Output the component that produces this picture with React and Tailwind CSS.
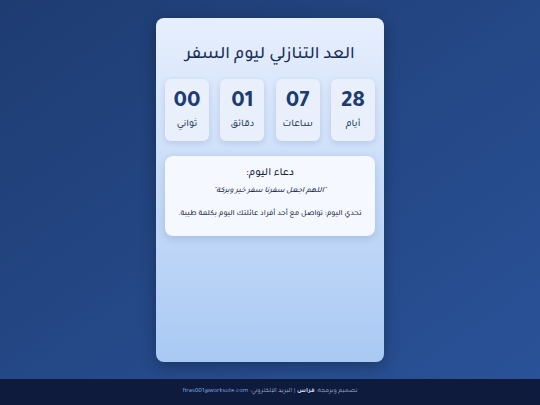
import React from "react";

const units = [
  { value: "28", label: "أيام" },
  { value: "07", label: "ساعات" },
  { value: "01", label: "دقائق" },
  { value: "00", label: "ثواني" },
];

export default function App() {
  return (
    <div
      dir="rtl"
      className="w-[540px] h-[405px] flex flex-col overflow-hidden font-['Tajawal','Noto_Sans_Arabic','DejaVu_Sans',sans-serif]"
    >
      <main className="h-[379px] flex items-center justify-center bg-gradient-to-br from-[#1e3c72] to-[#2a5298]">
        <section className="w-[228px] h-[344px] rounded-[8px] bg-gradient-to-b from-[#e7effd] to-[#a9c9f3] shadow-[0_4px_16px_rgba(0,0,0,0.3)] px-[9px] pt-[26px] flex flex-col">
          <h1 className="text-center text-[17.5px] leading-[24px] font-medium text-[#1a2f5c]">
            العد التنازلي ليوم السفر
          </h1>
          <div className="mt-[11px] flex justify-between">
            {units.map((u) => (
              <div
                key={u.label}
                className="w-[44px] h-[62px] rounded-[6px] bg-[#e9f0fc] shadow-[0_2px_6px_rgba(30,60,114,0.15)] flex flex-col items-center pt-[11px]"
              >
                <span className="text-[24px] leading-[26px] font-bold text-[#1e3c72]">
                  {u.value}
                </span>
                <span className="mt-[3px] text-[10px] leading-[12px] font-medium text-[#2b3f66]">
                  {u.label}
                </span>
              </div>
            ))}
          </div>
          <div className="mt-[15px] h-[80px] rounded-[8px] bg-[#f5f8fe] shadow-[0_2px_8px_rgba(30,60,114,0.18)] flex flex-col items-center pt-[11px] text-[#1a2a4a] font-medium">
            <h2 className="text-[11px] leading-[14px]">دعاء اليوم:</h2>
            <p className="mt-[4px] text-[7.9px] leading-[12px] italic">
              "اللهم اجعل سفرنا سفر خير وبركة"
            </p>
            <p className="mt-[11px] text-[7.8px] leading-[12px]">
              تحدي اليوم: تواصل مع أحد أفراد عائلتك اليوم بكلمة طيبة.
            </p>
          </div>
        </section>
      </main>
      <footer className="h-[26px] bg-[#0e1b3d] flex items-center justify-center text-[6.6px] text-[#a9b6cf]">
        <span>
          تصميم وبرمجة: <b className="font-bold text-[#d0d8e8]">فراس</b> | البريد الإلكتروني:{" "}
          <span className="text-[#8fb4f0]">firas001@worksute.com</span>
        </span>
      </footer>
    </div>
  );
}
